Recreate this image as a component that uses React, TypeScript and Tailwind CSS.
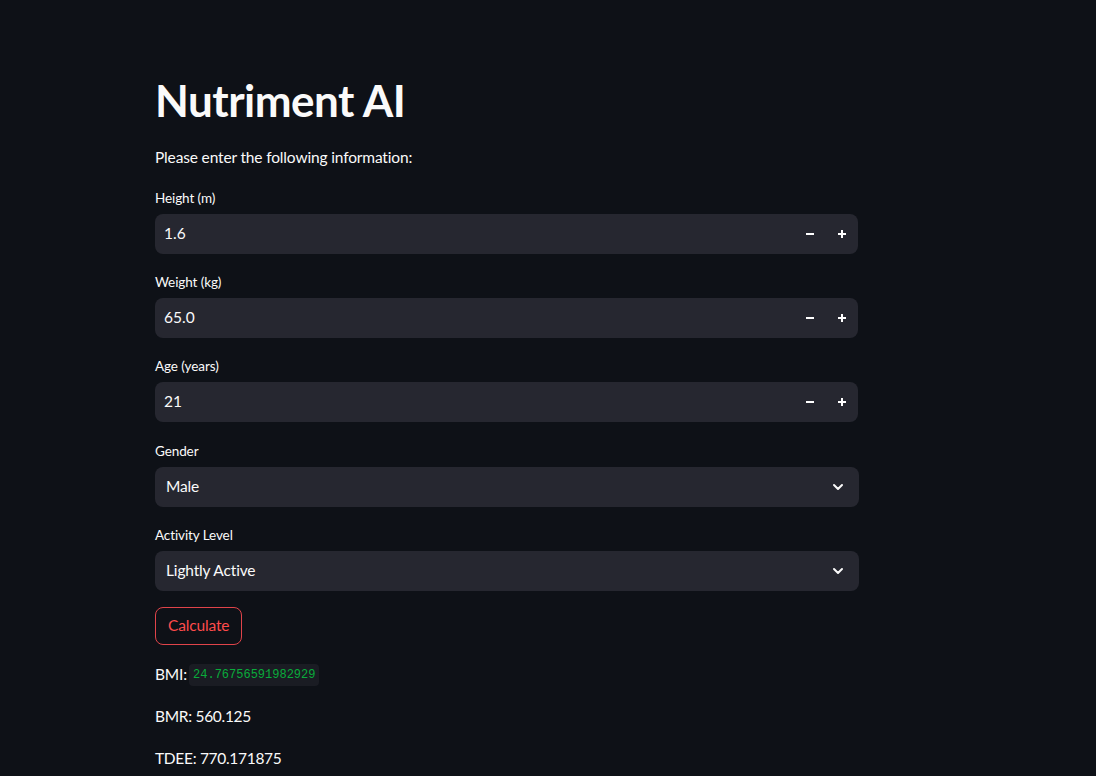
import { ChevronDown } from 'lucide-react';

const font = { fontFamily: 'Lato, "Noto Sans", sans-serif' };

function Label({ children }: { children: string }) {
  return <div className="h-6 mb-1 flex items-center text-[13.5px] tracking-[-0.1px] text-[#fafafa]">{children}</div>;
}

function NumberInput({ label, value }: { label: string; value: string }) {
  return (
    <div className="mb-4">
      <Label>{label}</Label>
      <div className="h-10 w-[703px] rounded-lg bg-[#262730] flex items-center">
        <span className="flex-1 pl-[9px] text-[15.5px] text-[#fafafa]">{value}</span>
        <button className="w-8 h-10 flex items-center justify-center text-white">
          <svg width="10" height="10" viewBox="0 0 10 10">
            <path d="M1 5h8" stroke="currentColor" strokeWidth="2" />
          </svg>
        </button>
        <button className="w-8 h-10 flex items-center justify-center text-white">
          <svg width="10" height="10" viewBox="0 0 10 10">
            <path d="M1 5h8M5 1v8" stroke="currentColor" strokeWidth="2" />
          </svg>
        </button>
      </div>
    </div>
  );
}

function Select({ label, value }: { label: string; value: string }) {
  return (
    <div className="mb-4">
      <Label>{label}</Label>
      <div className="h-10 w-[704px] rounded-lg bg-[#262730] flex items-center justify-between pl-[11px] pr-[13px]">
        <span className="text-[15.5px] tracking-[-0.15px] text-[#fafafa]">{value}</span>
        <ChevronDown className="w-4 h-4 text-[#fafafa]" strokeWidth={3} />
      </div>
    </div>
  );
}

export default function App() {
  return (
    <div className="min-h-[776px] w-full bg-[#0e1117] text-[#fafafa]" style={font}>
      <div className="pl-[155px] pt-[74px]">
        <h1 className="h-[53px] leading-[53px] text-[44px] font-bold tracking-[-0.5px]">Nutriment AI</h1>
        <p className="mt-[18px] h-6 leading-6 text-[15.5px] tracking-[-0.15px]">Please enter the following information:</p>
        <div className="mt-[17px]">
          <NumberInput label="Height (m)" value="1.6" />
          <NumberInput label="Weight (kg)" value="65.0" />
          <NumberInput label="Age (years)" value="21" />
          <div className="h-px" />
          <Select label="Gender" value="Male" />
          <Select label="Activity Level" value="Lightly Active" />
        </div>
        <button className="h-[38px] px-3 rounded-lg border border-[#e0444a] text-[#ff4b4b] text-[15.5px] tracking-[-0.15px] bg-transparent">
          Calculate
        </button>
        <div className="mt-[18px] h-6 flex items-center text-[15.5px] tracking-[-0.15px]">
          <span>BMI:</span>
          <code
            className="ml-[2px] px-1 py-[2px] rounded bg-[#1a1c23] text-[#09ab3b] text-[12px] tracking-normal"
            style={{ fontFamily: '"Liberation Mono", monospace' }}
          >
            24.76756591982929
          </code>
        </div>
        <p className="mt-[17px] h-6 leading-6 text-[15.5px] tracking-[-0.3px]">BMR: 560.125</p>
        <p className="mt-[18px] h-6 leading-6 text-[15.5px] tracking-[-0.3px]">TDEE: 770.171875</p>
      </div>
    </div>
  );
}
